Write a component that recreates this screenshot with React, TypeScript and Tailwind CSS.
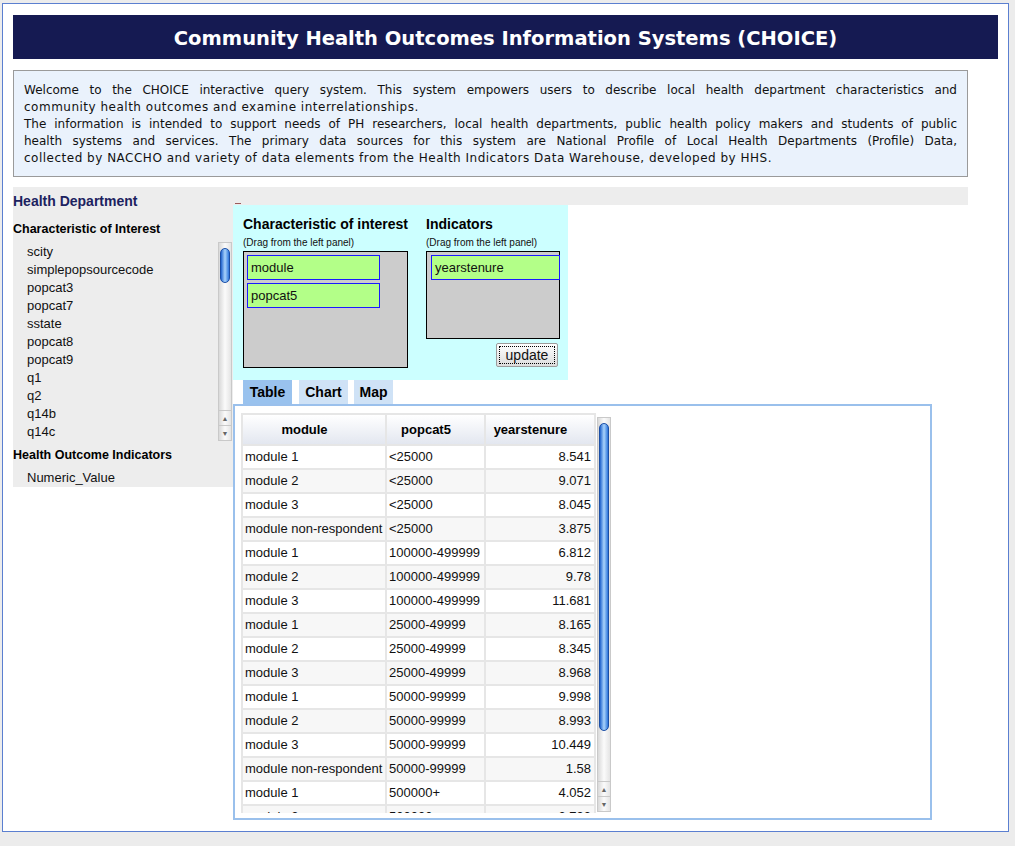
import React from 'react';

// Data rows for the result table
const rows: [string, string, string][] = [
  ['module 1', '<25000', '8.541'],
  ['module 2', '<25000', '9.071'],
  ['module 3', '<25000', '8.045'],
  ['module non-respondent', '<25000', '3.875'],
  ['module 1', '100000-499999', '6.812'],
  ['module 2', '100000-499999', '9.78'],
  ['module 3', '100000-499999', '11.681'],
  ['module 1', '25000-49999', '8.165'],
  ['module 2', '25000-49999', '8.345'],
  ['module 3', '25000-49999', '8.968'],
  ['module 1', '50000-99999', '9.998'],
  ['module 2', '50000-99999', '8.993'],
  ['module 3', '50000-99999', '10.449'],
  ['module non-respondent', '50000-99999', '1.58'],
  ['module 1', '500000+', '4.052'],
  ['module 2', '500000+', '3.793'],
];

const characteristics = [
  'scity',
  'simplepopsourcecode',
  'popcat3',
  'popcat7',
  'sstate',
  'popcat8',
  'popcat9',
  'q1',
  'q2',
  'q14b',
  'q14c',
];

const sans = "font-['Liberation_Sans',Arial,sans-serif]";
const verdana = "font-['DejaVu_Sans',Verdana,sans-serif]";

// Aqua style scrollbar
const ScrollBar: React.FC<{ trackClass: string; thumbClass: string }> = ({ trackClass, thumbClass }) => (
  <div
    className={`flex flex-col w-[14px] border border-[#c9c9c9] bg-linear-to-r from-[#d9d9d9] via-[#fbfbfb] to-[#e4e4e4] ${trackClass}`}
  >
    <div className="flex-1 pt-[5px] px-[1px]">
      <div
        className={`rounded-full border border-[#1a4ea6] bg-linear-to-r from-[#1e62cc] via-[#a9d3fb] to-[#2a74da] ${thumbClass}`}
      />
    </div>
    <div className="h-[15px] border-t border-[#c9c9c9] flex items-center justify-center text-[7px] leading-none text-[#666]">
      ▲
    </div>
    <div className="h-[15px] border-t border-[#c9c9c9] flex items-center justify-center text-[7px] leading-none text-[#666]">
      ▼
    </div>
  </div>
);

const App: React.FC = () => {
  return (
    <div className={`min-h-[846px] bg-[#ececec] pt-[3px] pl-[2px] ${sans}`}>
      <div className="w-[1007px] h-[829px] bg-white border border-[#5b7fd0] pl-[10px] pt-[11px]">
        {/* Header */}
        <div
          className={`w-[985px] h-[44px] bg-[#151a52] flex items-center justify-center pt-[3px] text-white font-bold text-[19.5px] ${verdana}`}
        >
          Community Health Outcomes Information Systems (CHOICE)
        </div>

        {/* Intro */}
        <div
          className={`mt-[11px] w-[955px] border border-[#9a9a9a] bg-[#eaf2fc] px-[10px] pt-[11px] pb-[9px] text-[12px] leading-[17px] text-[#111] ${verdana}`}
        >
          <div className="text-justify [text-align-last:justify]">
            Welcome to the CHOICE interactive query system. This system empowers users to describe local health department characteristics and
          </div>
          <div className="tracking-[0.5px]">community health outcomes and examine interrelationships.</div>
          <div className="text-justify [text-align-last:justify]">
            The information is intended to support needs of PH researchers, local health departments, public health policy makers and students of public
          </div>
          <div className="text-justify [text-align-last:justify]">
            health systems and services. The primary data sources for this system are National Profile of Local Health Departments (Profile) Data,
          </div>
          <div className="tracking-[0.5px]">
            collected by NACCHO and variety of data elements from the Health Indicators Data Warehouse, developed by HHS.
          </div>
        </div>

        {/* Query section */}
        <div className="mt-[10px] w-[955px] flex">
          {/* Left panel */}
          <div className="w-[220px] h-[300px] bg-[#ededed] pt-[4px]">
            <div className="text-[14px] leading-[20px] font-bold text-[#1c2260]">Health Department</div>
            <div className="mt-[9px] text-[12.5px] leading-[18px] font-bold text-black">Characteristic of Interest</div>
            <div className="mt-[4px] flex h-[199px]">
              <div className="flex-1 pl-[14px] pt-[1px] text-[13px] text-[#111]">
                {characteristics.map((c) => (
                  <div key={c} className="h-[18px] leading-[18px]">
                    {c}
                  </div>
                ))}
              </div>
              <ScrollBar trackClass="h-[199px] mr-[1px]" thumbClass="h-[35px]" />
            </div>
            <div className="mt-[5px] text-[12.5px] leading-[18px] font-bold text-black">Health Outcome Indicators</div>
            <div className="mt-[5px] pl-[14px] text-[13px] leading-[18px] text-[#111]">Numeric_Value</div>
          </div>

          {/* Right side */}
          <div className="flex-1 flex flex-col">
            <div className="h-[18px] bg-[#ededed] flex items-end pb-[1px] pl-[2px]">
              <div className="w-[6px] h-[1px] bg-[#9a5a5a]" />
            </div>

            {/* Drop panel */}
            <div className="w-[335px] h-[175px] bg-[#ccffff] pl-[10px] pt-[10px] flex gap-[18px]">
              <div className="flex flex-col">
                <div className="text-[14px] leading-[18px] font-bold text-black">Characteristic of interest</div>
                <div className="mt-[4px] text-[10px] leading-[12px] text-[#111]">(Drag from the left panel)</div>
                <div className="mt-[2px] w-[165px] h-[117px] bg-[#cccccc] border border-black pt-[3px] pl-[3px] flex flex-col gap-[3px]">
                  <div className="w-[133px] h-[25px] bg-[#b3ff88] border border-[#1a1aff] pl-[3px] text-[13px] leading-[23px] text-[#111]">
                    module
                  </div>
                  <div className="w-[133px] h-[25px] bg-[#b3ff88] border border-[#1a1aff] pl-[3px] text-[13px] leading-[23px] text-[#111]">
                    popcat5
                  </div>
                </div>
              </div>
              <div className="flex flex-col">
                <div className="text-[14px] leading-[18px] font-bold text-black">Indicators</div>
                <div className="mt-[4px] text-[10px] leading-[12px] text-[#111]">(Drag from the left panel)</div>
                <div className="mt-[2px] w-[134px] h-[88px] bg-[#cccccc] border border-black pt-[3px] pl-[4px]">
                  <div className="w-[129px] h-[25px] bg-[#b3ff88] border border-[#1a1aff] pl-[3px] text-[13px] leading-[23px] text-[#111]">
                    yearstenure
                  </div>
                </div>
                <div className="mt-[4px] flex justify-end pr-[2px]">
                  <button className="w-[62px] h-[24px] border border-[#9c9c9c] rounded-[2px] bg-linear-to-b from-white to-[#dcdcdc] flex items-center justify-center p-[2px]">
                    <span className="w-full h-full border border-dotted border-black text-[14px] leading-[17px] text-[#111]">
                      update
                    </span>
                  </button>
                </div>
              </div>
            </div>

            {/* Tabs */}
            <div className="h-[24px] flex pl-[10px] text-[14px] font-bold text-black">
              <div className="w-[49px] bg-[#99c2ee] flex items-center justify-center">Table</div>
              <div className="ml-[7px] w-[49px] bg-[#cfe2f6] flex items-center justify-center">Chart</div>
              <div className="ml-[6px] w-[39px] bg-[#cfe2f6] flex items-center justify-center">Map</div>
            </div>

            {/* Table container */}
            <div className="w-[699px] h-[416px] border-2 border-[#9ac0ec] pl-[6px] pt-[7px] flex">
              <div className="w-[355px] h-[400px] overflow-hidden">
                <div className="grid grid-cols-[142px_97px_108px] gap-[2px] p-[2px] bg-[#e6e6e6] text-[13px] text-[#111]">
                  {['module', 'popcat5', 'yearstenure'].map((h) => (
                    <div
                      key={h}
                      className="h-[29px] bg-linear-to-b from-white to-[#e3e7f0] flex items-center justify-center pr-[19px] font-bold text-black"
                    >
                      {h}
                    </div>
                  ))}
                  {rows.map((r, i) => {
                    const bg = i % 2 === 0 ? 'bg-white' : 'bg-[#f7f7f7]';
                    return (
                      <React.Fragment key={i}>
                        <div className={`h-[22px] leading-[22px] pl-[2px] whitespace-nowrap ${bg}`}>{r[0]}</div>
                        <div className={`h-[22px] leading-[22px] pl-[2px] ${bg}`}>{r[1]}</div>
                        <div className={`h-[22px] leading-[22px] pr-[3px] text-right ${bg}`}>{r[2]}</div>
                      </React.Fragment>
                    );
                  })}
                </div>
              </div>
              <div className="mt-[4px] ml-[1px]">
                <ScrollBar trackClass="h-[395px]" thumbClass="h-[308px]" />
              </div>
            </div>
          </div>
        </div>
      </div>
    </div>
  );
};

export default App;
